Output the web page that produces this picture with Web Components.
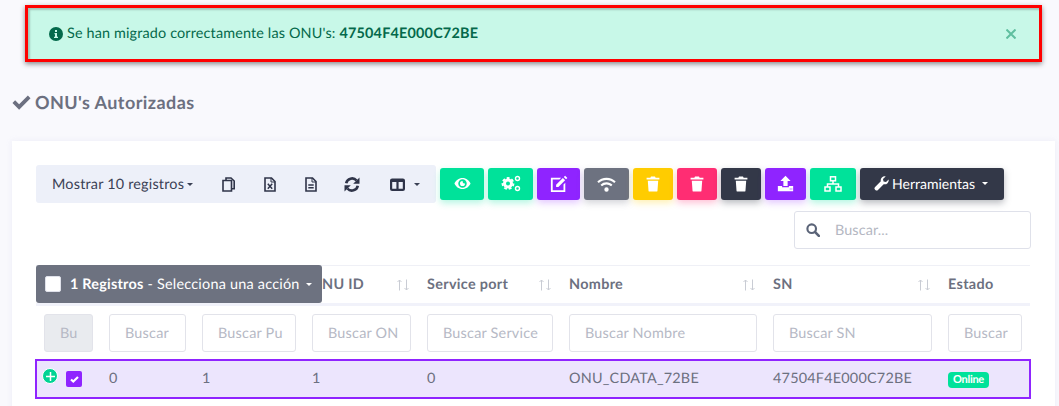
<!DOCTYPE html>
<html><head><meta charset="utf-8"><style>
html,body{margin:0;height:406px;overflow:hidden;background:#f9f9fd;font-family:"Lato","Noto Sans",sans-serif;text-rendering:geometricPrecision;}
</style></head><body>
<onu-page>
<onu-alert>Se han migrado correctamente las ONU's: <b>47504F4E000C72BE</b></onu-alert>
<onu-heading>ONU's Autorizadas</onu-heading>
<onu-card>
 <onu-toolbar></onu-toolbar>
 <onu-search></onu-search>
 <onu-table></onu-table>
</onu-card>
</onu-page>
<script>
const I={
check:'<path d="M.5 10.500l2.800-2.800 4.200 4.200L16.700 2.700l2.800 2.800L7.500 17.500z"/>',
eye:'<path fill-rule="evenodd" d="M10 3.500C5.500 3.500 2 6.500 .5 10c1.500 3.500 5 6.500 9.500 6.500s8-3 9.500-6.500C18 6.500 14.500 3.500 10 3.500zM10 15a5 5 0 1 1 0-10 5 5 0 0 1 0 10zM10 7a3 3 0 1 0 3 3c0-.3-2 .3-2.500-1S10.300 7 10 7z"/>',
trash:'<path d="M7.500 .5h5l.8 1.700H18v2.300H2V2.200h4.700zM3.500 6h13l-.9 12.300a1.300 1.300 0 0 1-1.300 1.200H5.700a1.300 1.300 0 0 1-1.300-1.200z"/>',
upload:'<path fill-rule="evenodd" d="M10 1l6 6h-3.500v6h-5V7H4zM1 13h5v1.500h8V13h5v6H1zM15 16v1h1v-1zm2 0v1h1v-1z"/>',
wifi:'<path d="M10 4c3.800 0 7.200 1.500 9.700 3.900l-1.500 1.600A11.800 11.800 0 0 0 10 6.200 11.800 11.800 0 0 0 1.800 9.500L.3 7.900C2.800 5.500 6.200 4 10 4zm0 4.800c2.500 0 4.700 1 6.300 2.500l-1.500 1.600A6.900 6.900 0 0 0 10 11a6.900 6.900 0 0 0-4.800 1.900l-1.500-1.600A9.100 9.100 0 0 1 10 8.800zM10 14a2.300 2.300 0 1 1 0 4.600 2.300 2.300 0 0 1 0-4.600z"/>',
edit:'<path d="M16.800 .7l2.500 2.500-1.500 1.500-2.500-2.500zM14.300 3.200l2.500 2.500L9.300 13.200H6.800v-2.500z"/><path fill-rule="evenodd" d="M1 3h11.500l-2 2H3v12h12v-6.500l2-2V19H1z"/>',
};
const svg=(k,s,extra='')=>`<svg width="${s}" height="${s}" viewBox="0 0 20 20" fill="currentColor" ${extra} style="display:block">${I[k]}</svg>`;
const G={
cogs:`<svg width="20" height="17" viewBox="0 0 20 17" fill="none" stroke="#fff" style="display:block"><circle cx="7" cy="8.500" r="3.500" stroke-width="3"/><circle cx="7" cy="8.500" r="5.500" stroke-width="1.800" stroke-dasharray="2.800 2"/><circle cx="16.500" cy="3.500" r="2" stroke-width="1.400"/><circle cx="16.500" cy="13.500" r="2" stroke-width="1.400"/></svg>`,
sitemap:`<svg width="18" height="16" viewBox="0 0 18 16" fill="none" stroke="#fff" stroke-width="1.500" style="display:block"><rect x="6.500" y=".8" width="5" height="4"/><rect x="1" y="11" width="5" height="4"/><rect x="12" y="11" width="5" height="4"/><path d="M9 5v3M3.500 11V8h11v3"/></svg>`,
wrench:`<svg width="15" height="15" viewBox="0 0 20 20" fill="#fff" style="display:block"><path d="M19.500 4.500c.4 1.800-.1 3.700-1.500 5-1.400 1.400-3.300 1.900-5.100 1.400L5.300 18.500a2.400 2.400 0 0 1-3.500 0l-.3-.3a2.400 2.400 0 0 1 0-3.500L9.100 7.100C8.600 5.300 9.100 3.400 10.500 2 11.800.6 13.700.100 15.500.500L12 4l.7 3.300 3.300.7z"/></svg>`,
search:`<svg width="14" height="14" viewBox="0 0 13 13" fill="none" stroke="#5b6478" style="display:block"><circle cx="5.300" cy="5.300" r="4" stroke-width="2"/><path d="M8.300 8.300l3.600 3.600" stroke-width="2.400" stroke-linecap="round"/></svg>`,
copy:`<svg width="13" height="15" viewBox="0 0 13 15" fill="none" stroke="#2f3449" stroke-width="1.600" style="display:block"><path d="M4 3V1h5l3.200 3v7.800H9.500"/><path d="M1 3.500h8.500V14H1z" fill="#edf0f9"/></svg>`,
excel:`<svg width="12" height="15" viewBox="0 0 12 15" fill="none" stroke="#2f3449" stroke-width="1.600" style="display:block"><path d="M1 1h6.500L11 4.500V14H1z"/><path d="M7 1v4h4" stroke-width="1"/><path d="M3.800 6.800l4.400 4.900M8.200 6.800l-4.400 4.900" stroke-width="1.500"/></svg>`,
file:`<svg width="12" height="15" viewBox="0 0 12 15" fill="none" stroke="#2f3449" stroke-width="1.600" style="display:block"><path d="M1 1h6.500L11 4.500V14H1z"/><path d="M7 1v4h4" stroke-width="1"/><path d="M3.300 8h5.400M3.300 10.800h5.400" stroke-width="1.500"/></svg>`,
refresh:`<svg width="16" height="15" viewBox="0 0 16 15" fill="none" stroke="#2f3449" stroke-width="2.600" style="display:block"><path d="M2.200 6.300A6 6 0 0 1 12.600 3.500"/><path d="M13.800 8.700A6 6 0 0 1 3.400 11.500"/><path d="M15.500 .5v6.300h-6.300z" fill="#2f3449" stroke="none"/><path d="M.5 14.500V8.200h6.300z" fill="#2f3449" stroke="none"/></svg>`,
columns:`<svg width="15" height="13" viewBox="0 0 15 13" fill="none" stroke="#2f3449" stroke-width="2.200" style="display:block"><rect x="1.100" y="1.500" width="12.800" height="10.400" rx="1"/><path d="M7.500 2v9M1 3h13"/></svg>`,
info:`<svg width="14" height="14" viewBox="0 0 14 14" style="display:block"><circle cx="7" cy="7" r="7" fill="#04694b"/><path d="M6 3h2v2H6zM5.500 6h2.500v3.700h1V11H5v-1.300h1V7.300h-.5z" fill="#c8f8e8"/></svg>`,
};
function def(name,css,html){
 customElements.define(name,class extends HTMLElement{
  constructor(){super();this.attachShadow({mode:'open'}).innerHTML=`<style>${css}</style>${typeof html==='function'?html():html}`;}
 });
}
def('onu-page',':host{display:block;padding:5px 4px 0 12px;box-sizing:border-box;width:1059px;height:406px;overflow:hidden}','<slot></slot>');
def('onu-alert',`:host{display:flex;align-items:center;box-sizing:border-box;margin-left:13px;width:1017px;height:57px;border:3px solid #f00;background:#c8f8e8;color:#04694b;font-size:14.4px;letter-spacing:.15px;padding:0 0 0 21px;box-shadow:0 2px 5px rgba(0,0,0,.45),inset 2px 2px 2px rgba(0,0,0,.2)}
 .i{margin-right:4px}.t{flex:1;display:block;margin-top:-1px}::slotted(b){font-weight:700;letter-spacing:.2px}
 .x{width:10px;height:10px;margin-right:23px}`,
 `<span class="i">${G.info}</span><span class="t"><slot></slot></span><svg class="x" viewBox="0 0 10 10" stroke="#5fbf9f" stroke-width="2" fill="none"><path d="M.5.5l9 9M9.500.5l-9 9"/></svg>`);
def('onu-heading',`:host{display:flex;align-items:center;gap:4px;color:#6c7080;font-size:18px;letter-spacing:.42px;font-weight:700;height:24px;margin-top:28px;margin-bottom:27px}`,
 `<span style="color:#6c7080">${svg('check',19)}</span><slot></slot>`);
def('onu-card',`:host{display:block;position:relative;background:#fff;width:1043px;height:300px;box-sizing:border-box;padding:24px 0 0 24px;box-shadow:0 0 6px rgba(230,230,245,.6)}`,'<slot></slot>');
customElements.define('onu-btn',class extends HTMLElement{
 constructor(){super();this.attachShadow({mode:'open'}).innerHTML=`<style>:host{display:flex;align-items:center;justify-content:center;box-sizing:border-box;height:32px;border-radius:3px;color:#fff;font-size:14px;gap:3px;background:var(--b);box-shadow:0 3px 7px var(--s)}</style><slot></slot>`}
});
const btn=(w,b,s,c)=>`<onu-btn style="width:${w}px;--b:${b};--s:${s}">${c}</onu-btn>`;
const GR='#00e29a',GS='rgba(0,226,154,.3)',PU='#8f24ff',PS='rgba(143,36,255,.25)',DK='#333848',DS='rgba(51,56,72,.35)';
const caret=(c,w=4)=>`<span style="display:inline-block;border-left:${w}px solid transparent;border-right:${w}px solid transparent;border-top:${w}px solid ${c}"></span>`;
def('onu-toolbar',`:host{display:flex;align-items:center;height:38px}
 .dt{display:flex;align-items:center;width:400px;height:38px;background:#edf0f9;border-radius:3px;color:#3b4155;font-size:14.4px;margin-right:4px;box-sizing:border-box;padding-left:16px}
 .dt span.m{width:156px;display:flex;align-items:center;gap:3px;white-space:nowrap;letter-spacing:.2px}
 .c{width:41px;display:flex;justify-content:center}
 .bs{display:flex;gap:4px;align-items:center;margin-top:-1px}`,
 ()=>`<div class="dt"><span class="m">Mostrar 10 registros ${caret('#3b4155',3.5)}</span>
 <span class="c">${G.copy}</span><span class="c">${G.excel}</span><span class="c">${G.file}</span><span class="c">${G.refresh}</span><span class="c" style="gap:9px;align-items:center;width:auto;margin-left:18px">${G.columns}${caret('#3b4155',3.5)}</span></div>
 <div class="bs">${btn(44,GR,GS,svg('eye',17))}${btn(45,GR,GS,G.cogs)}${btn(43,PU,PS,svg('edit',18))}${btn(45,'#6d7280','rgba(109,114,128,.3)',svg('wifi',19))}${btn(40,'#ffcc00','rgba(255,204,0,.3)',svg('trash',16))}${btn(40,'#ff2d73','rgba(255,45,115,.3)',svg('trash',16))}${btn(40,DK,DS,svg('trash',16))}${btn(41,PU,PS,svg('upload',17))}${btn(46,GR,GS,G.sitemap)}${btn(144,DK,DS,`${G.wrench}<span>Herramientas</span><span style="margin-left:4px;margin-right:2px;display:flex">${caret('#fff',3.5)}</span>`)}</div>`);
def('onu-search',`:host{display:flex;justify-content:flex-end;margin:8px 0 0;width:995px}
 .s{display:flex;align-items:center;box-sizing:border-box;width:237px;height:38px;border:1px solid #dfe1ea;border-radius:3px;padding-left:11px;gap:15px;color:#b4b7c2;font-size:14.4px;letter-spacing:.1px;background:#fff}`,
 `<div class="s">${G.search}<span>Buscar...</span></div>`);
const cols='65px 93px 110px 115px 142px 204px 175px 90px';
const arrows=`<svg width="15" height="12" viewBox="0 0 15 12" fill="none" stroke="#c9ccd4" style="display:block"><path d="M3.500 11.500V1M1.500 3l2-2 2 2M10.500.5V11M8.500 9l2 2 2-2"/></svg>`;
def('onu-table',`:host{display:block;position:relative;width:994px;margin-top:16px;color:#6c7080;font-size:14.4px;letter-spacing:.22px}
 .r{display:grid;grid-template-columns:${cols}}
 .h{height:37px;border-top:1px solid #eff0f6;border-bottom:3px solid #f1f2fa;font-weight:700;align-items:center;letter-spacing:.32px}
 .h>div{display:flex;justify-content:space-between;align-items:center;padding:0 8px;min-width:0}
 .f{padding:8px 0 7px;height:38px}.f>div{padding:0 8px;min-width:0}
 .in{box-sizing:border-box;height:38px;border:1px solid #e2e3ea;border-radius:3px;color:#b6b9c5;display:flex;align-items:center;padding:0 4px 0 15px;background:#fff}
 .in span{display:block;white-space:nowrap}
 .d{margin-left:-1px;width:996px;box-sizing:border-box;height:40px;border:2px solid #8f24ff;background:#ece5fd;align-items:center;grid-template-columns:64px 93px 110px 115px 142px 204px 175px 90px}
 .d>div{padding:0 8px 2px;white-space:nowrap}
 .d>div:first-child{padding:0}
 .tick{width:16px;height:16px;background:#8f24ff;border-radius:2px;display:flex;align-items:center;justify-content:center;position:absolute;left:30px;top:106px}
 .plus{width:14px;height:14px;border-radius:50%;border:1.5px solid #fff;background:#00d395;position:absolute;left:6px;top:103px;display:flex;align-items:center;justify-content:center}
 .badge{display:inline-flex;align-items:center;justify-content:center;background:#00e29a;color:#fff;border-radius:4px;width:41px;height:16px;font-size:11px;letter-spacing:-.3px;font-weight:700;vertical-align:middle;margin-top:3px}
 .pop{position:absolute;left:0;top:0;width:286px;height:38px;background:#6d7280;border-radius:3px;color:#fff;display:flex;align-items:center;box-sizing:border-box;padding-left:9px;font-size:14.4px;letter-spacing:.23px;white-space:nowrap}
 .pop i{display:block;width:16px;height:16px;background:#fff;border-radius:2px;margin-right:9px;border:1px solid #dfe1ea;box-sizing:border-box}
 .pop b{font-weight:700;margin-right:4px}.pop span{margin-left:3px;display:flex}`,
 ()=>{
  const hs=['','','','NU ID','Service port','Nombre','SN','Estado'];
  const ph=['Bu','Buscar','Buscar Pu','Buscar ON','Buscar Service','Buscar Nombre','Buscar SN','Buscar'];
  return `<div class="r h">${hs.map((h,i)=>`<div style="${i==3?'padding-left:18px;':''}"><span>${h}</span>${i>=3&&i<7?arrows:''}</div>`).join('')}</div>
  <div class="r f">${ph.map((p,i)=>`<div><div class="in" style="${i==0?'background:#e9ebef;padding-left:15px':''}"><span>${p}</span></div></div>`).join('')}</div>
  <div class="r d"><div></div><div>0</div><div>1</div><div>1</div><div>0</div><div>ONU_CDATA_72BE</div><div>47504F4E000C72BE</div><div><span class="badge">Online</span></div></div>
  <div class="plus"><svg width="9" height="9" viewBox="0 0 9 9" stroke="#fff" stroke-width="1.500"><path d="M4.500 0v9M0 4.500h9"/></svg></div>
  <div class="tick"><svg width="9" height="8" viewBox="0 0 9 8" fill="none" stroke="#fff" stroke-width="2.200"><path d="M1 4.500l2.300 2L8 2"/></svg></div>
  <div class="pop"><i></i><b>1 Registros</b> - Selecciona una acción<span>${caret('#fff',3.5)}</span></div>`;
 });
</script>
</body></html>
